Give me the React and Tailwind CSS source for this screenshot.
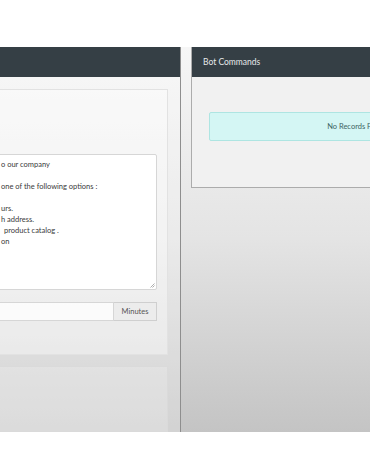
export default function App() {
  const font = { fontFamily: 'Lato, "Open Sans", sans-serif' };
  return (
    <div className="w-[370px] h-[474px] bg-white overflow-hidden flex flex-col" style={font}>
      <div className="h-[47px] shrink-0 bg-white" />
      <div className="h-[385px] shrink-0 flex bg-gradient-to-b from-[#f6f6f6] via-[#e4e4e4] to-[#c4c4c4] overflow-hidden">
        {/* Left panel */}
        <div className="w-[181px] shrink-0 flex flex-col border-r border-[#8e8e8e] bg-white/25 overflow-hidden">
          <div className="h-[30px] shrink-0 bg-[#353f45]" />
          <div className="flex-1 flex flex-col pt-[12px] pr-[12px] -ml-[20px]">
            <div className="h-[266px] shrink-0 border border-[#e2e2e2] bg-white/40 pr-[10px] pt-[64px] flex flex-col">
              <div className="h-[136px] border border-[#d6d6d6] bg-white rounded-[2px] relative pt-[4px] text-[7.5px] leading-[11px] text-[#3a3a3a] pl-[19px]">
                <div>o our company</div>
                <div>&nbsp;</div>
                <div>one of the following options :</div>
                <div>&nbsp;</div>
                <div>urs.</div>
                <div>h address.</div>
                <div className="pl-[3px]">product catalog .</div>
                <div>on</div>
                <svg className="absolute right-[1px] bottom-[1px]" width="5" height="5" viewBox="0 0 5 5">
                  <path d="M4.5 0.5 L0.5 4.5 M4.5 2.5 L2.5 4.5" stroke="#9a9a9a" strokeWidth="0.8" />
                </svg>
              </div>
              <div className="mt-[12px] h-[19px] flex">
                <div className="flex-1 border border-[#d6d6d6] bg-white/80" />
                <div className="w-[43px] border border-l-0 border-[#cfcfcf] bg-[#ececec] flex items-center justify-center text-[7.5px] text-[#555]">
                  Minutes
                </div>
              </div>
            </div>
            <div className="mt-[11px] flex-1 border border-[#dadada] bg-white/20" />
          </div>
        </div>
        {/* Gap */}
        <div className="w-[10px] shrink-0" />
        {/* Right panel */}
        <div className="w-[332px] shrink-0 self-start h-[141px] border-l border-b border-[#acacac] bg-[#f1f1f1] flex flex-col">
          <div className="h-[30px] shrink-0 bg-[#353f45] flex items-center pl-[11px] text-[8.5px] text-[#e6e9ea]">
            Bot Commands
          </div>
          <div className="pt-[35px] pl-[17px] pr-[17px]">
            <div className="h-[29px] border border-[#aee5e2] bg-[#d4f6f4] rounded-[2px] flex items-center justify-center text-[7.5px] text-[#3d6464]">
              <span>No Records Found</span>
            </div>
          </div>
        </div>
      </div>
      <div className="flex-1 bg-white" />
    </div>
  );
}
